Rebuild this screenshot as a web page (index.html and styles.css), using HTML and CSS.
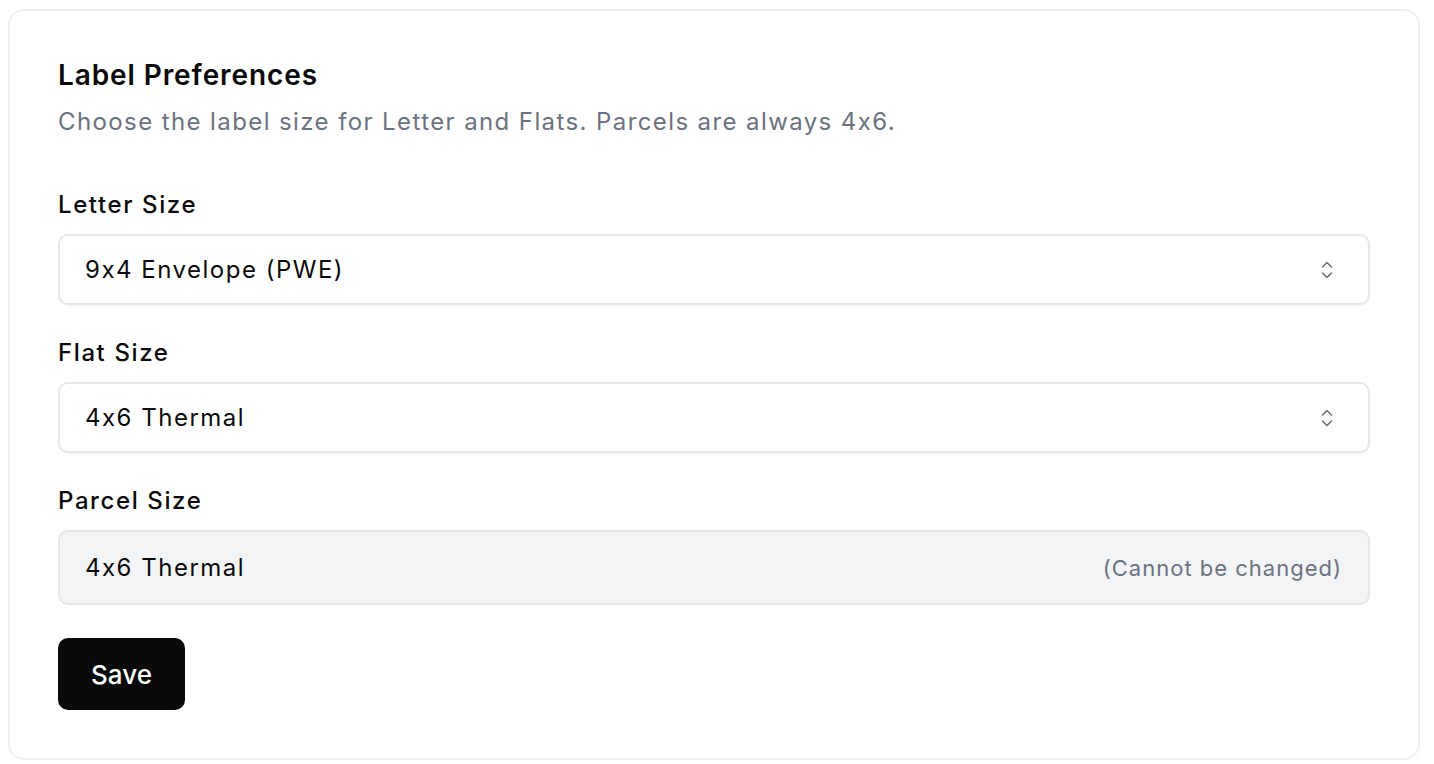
FILE: index.html
```html
<!DOCTYPE html>
<html lang="en">
<head>
    <meta charset="UTF-8">
    <meta name="viewport" content="width=device-width, initial-scale=1.0">
    <title>Label Preferences</title>
    <link rel="stylesheet" href="styles.css">
</head>
<body>
    <div class="card">
        <h2 class="title">Label Preferences</h2>
        <p class="subtitle">Choose the label size for Letter and Flats. Parcels are always 4x6.</p>

        <div class="field">
            <label class="label">Letter Size</label>
            <div class="select">
                <span>9x4 Envelope (PWE)</span>
                <svg class="chevrons" width="20" height="20" viewBox="0 0 20 20" fill="none" stroke="currentColor" stroke-width="1.6" stroke-linecap="round" stroke-linejoin="round">
                    <path d="M5.5 7 10 2.5 14.5 7"/>
                    <path d="M5.5 13 10 17.5 14.5 13"/>
                </svg>
            </div>
        </div>

        <div class="field">
            <label class="label">Flat Size</label>
            <div class="select">
                <span>4x6 Thermal</span>
                <svg class="chevrons" width="20" height="20" viewBox="0 0 20 20" fill="none" stroke="currentColor" stroke-width="1.6" stroke-linecap="round" stroke-linejoin="round">
                    <path d="M5.5 7 10 2.5 14.5 7"/>
                    <path d="M5.5 13 10 17.5 14.5 13"/>
                </svg>
            </div>
        </div>

        <div class="field">
            <label class="label">Parcel Size</label>
            <div class="select disabled">
                <span>4x6 Thermal</span>
                <span class="note">(Cannot be changed)</span>
            </div>
        </div>

        <button class="save">Save</button>
    </div>
</body>
</html>
```

FILE: styles.css
```css
body {
    font-family: Inter, "Noto Sans", sans-serif;
    font-feature-settings: "calt" 0;
    margin: 0;
    padding: 9px 14px 5px 8px;
    background: #fff;
    color: #0a0a0a;
}
.card {
    border: 2px solid #f0f0f0;
    border-radius: 16px;
    padding: 46px 48px 48px 48px;
}
.title {
    margin: 0;
    font-size: 28px;
    line-height: 36px;
    font-weight: 600;
    letter-spacing: 0.9px;
}
.subtitle {
    margin: 11px 0 0;
    font-size: 24px;
    line-height: 36px;
    color: #6b7280;
    letter-spacing: 1.4px;
}
.field {
    margin-top: 49px;
}
.field + .field {
    margin-top: 32px;
}
.label {
    display: block;
    font-size: 24px;
    line-height: 32px;
    font-weight: 500;
    letter-spacing: 1.6px;
    margin-bottom: 13px;
}
.select {
    display: flex;
    align-items: center;
    justify-content: space-between;
    height: 71px;
    box-sizing: border-box;
    padding: 0 31px 0 25px;
    border: 2px solid #e5e7eb;
    border-radius: 10px;
    box-shadow: 0 1px 2px rgba(0, 0, 0, 0.05);
    font-size: 24px;
    letter-spacing: 1.5px;
}
.chevrons {
    color: #6b7280;
}
.disabled {
    height: 75px;
    background: #f3f4f6;
    box-shadow: none;
    padding-right: 26px;
}
.note {
    font-size: 22px;
    color: #6b7280;
    letter-spacing: 1px;
}
.save {
    margin-top: 33px;
    width: 127px;
    height: 72px;
    border: none;
    border-radius: 10px;
    background: #0a0a0a;
    color: #fff;
    font-family: inherit;
    font-size: 26px;
    font-weight: 500;
    cursor: pointer;
}
```
